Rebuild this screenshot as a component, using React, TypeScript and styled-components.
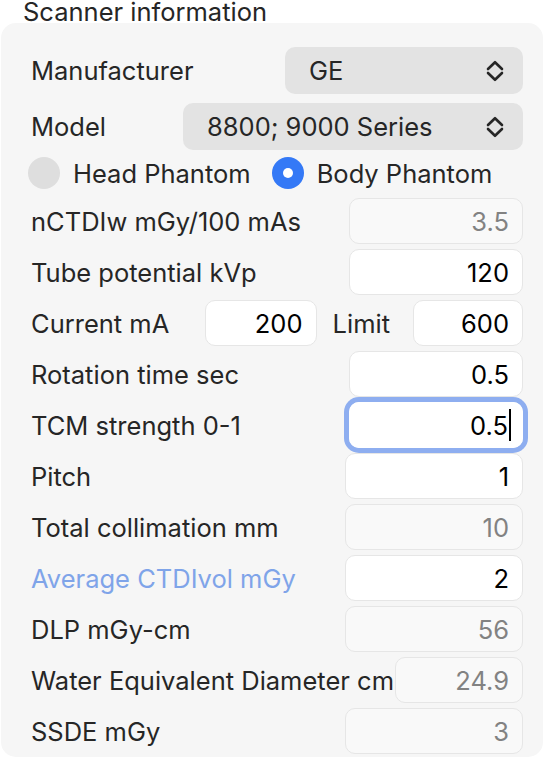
import React from 'react';
import styled, { createGlobalStyle } from 'styled-components';

const GlobalStyle = createGlobalStyle`
  html, body {
    margin: 0;
    padding: 0;
    background: #ffffff;
  }
  body {
    font-family: Inter, 'Noto Sans', sans-serif;
    color: #262626;
    -webkit-font-smoothing: antialiased;
  }
`;

const Page = styled.div`
  width: 545px;
  height: 760px;
  overflow: hidden;
  padding-left: 1px;
  box-sizing: border-box;
`;

const Title = styled.div`
  margin-left: 22px;
  height: 23px;
  font-size: 25.5px;
  line-height: 24px;
  color: #262626;
`;

const Panel = styled.div`
  width: 542px;
  height: 734px;
  box-sizing: border-box;
  background: #f6f6f6;
  border-radius: 15px;
  padding: 24px 20px 0 30px;
  display: flex;
  flex-direction: column;
  gap: 5px;
`;

const Row = styled.div<{ h?: number; mt?: number }>`
  display: flex;
  align-items: center;
  justify-content: space-between;
  height: ${(p) => p.h ?? 46}px;
  margin-top: ${(p) => p.mt ?? 0}px;
  flex-shrink: 0;
`;

const Label = styled.label<{ accent?: boolean }>`
  font-size: 25.5px;
  color: ${(p) => (p.accent ? '#7fa4e9' : '#262626')};
  white-space: nowrap;
`;

const Select = styled.div<{ w: number }>`
  width: ${(p) => p.w}px;
  height: 47px;
  box-sizing: border-box;
  background: #e3e3e3;
  border-radius: 10px;
  padding: 0 19px 0 24px;
  display: flex;
  align-items: center;
  justify-content: space-between;
  font-size: 25.5px;
  color: #262626;
`;

const Chevrons = () => (
  <svg width="18" height="22" viewBox="0 0 18 22" fill="none">
    <path
      d="M2 9 L9 2.2 L16 9 M2 13 L9 19.8 L16 13"
      stroke="#262626"
      strokeWidth="2.6"
      strokeLinecap="round"
      strokeLinejoin="round"
    />
  </svg>
);

const RadioGroup = styled.div`
  display: flex;
  align-items: center;
  margin-left: -3px;
`;

const RadioItem = styled.div<{ gapAfter?: number }>`
  display: flex;
  align-items: center;
  gap: 13px;
  margin-right: ${(p) => p.gapAfter ?? 0}px;
  font-size: 25.5px;
`;

const RadioDot = styled.span<{ checked?: boolean }>`
  width: 32px;
  height: 32px;
  border-radius: 50%;
  box-sizing: border-box;
  background: ${(p) => (p.checked ? '#3479f6' : '#dedede')};
  display: flex;
  align-items: center;
  justify-content: center;
  &::after {
    content: '';
    display: ${(p) => (p.checked ? 'block' : 'none')};
    width: 10px;
    height: 10px;
    border-radius: 50%;
    background: #ffffff;
  }
`;

const FieldWrap = styled.div<{ w: number; focused?: boolean; ml?: number }>`
  position: relative;
  width: ${(p) => p.w}px;
  height: 46px;
  flex-shrink: 0;
  margin-left: ${(p) => p.ml ?? 0}px;
  border-radius: 10px;
  box-shadow: ${(p) => (p.focused ? '0 0 0 5px #8eaef0' : 'none')};
`;

const Field = styled.input<{ focused?: boolean }>`
  width: 100%;
  height: 100%;
  box-sizing: border-box;
  border: ${(p) => (p.focused ? 'none' : '1.5px solid #e6e6e6')};
  border-radius: 10px;
  background: #ffffff;
  padding: 0 ${(p) => (p.focused ? 15 : 13)}px 0 10px;
  text-align: right;
  font-family: Inter, 'Noto Sans', sans-serif;
  font-size: 25.5px;
  color: #000000;
  outline: none;
  &:read-only {
    background: #f9f9f9;
    color: #828282;
  }
`;

const Caret = styled.span`
  position: absolute;
  right: 12px;
  top: 7px;
  width: 2.5px;
  height: 32px;
  background: #000000;
`;

const Inline = styled.div`
  display: flex;
  align-items: center;
`;

const InlineLabel = styled(Label)`
  margin-left: 16px;
`;

type FieldRow = {
  label: string;
  value: string;
  w: number;
  readOnly?: boolean;
  accent?: boolean;
  focused?: boolean;
};

const rows: FieldRow[] = [
  { label: 'nCTDIw mGy/100 mAs', value: '3.5', w: 174, readOnly: true },
  { label: 'Tube potential kVp', value: '120', w: 174 },
];

const rowsAfter: FieldRow[] = [
  { label: 'Rotation time sec', value: '0.5', w: 174 },
  { label: 'TCM strength 0-1', value: '0.5', w: 174, focused: true },
  { label: 'Pitch', value: '1', w: 178 },
  { label: 'Total collimation mm', value: '10', w: 178, readOnly: true },
  { label: 'Average CTDIvol mGy', value: '2', w: 178, accent: true },
  { label: 'DLP mGy-cm', value: '56', w: 178, readOnly: true },
  { label: 'Water Equivalent Diameter cm', value: '24.9', w: 128, readOnly: true },
  { label: 'SSDE mGy', value: '3', w: 178, readOnly: true },
];

const InputRow: React.FC<{ row: FieldRow; mt?: number }> = ({ row, mt }) => (
  <Row mt={mt}>
    <Label accent={row.accent}>{row.label}</Label>
    <FieldWrap w={row.w} focused={row.focused}>
      <Field defaultValue={row.value} readOnly={row.readOnly} focused={row.focused} />
      {row.focused && <Caret />}
    </FieldWrap>
  </Row>
);

const App: React.FC = () => {
  return (
    <Page>
      <GlobalStyle />
      <Title>Scanner information</Title>
      <Panel>
        <Row h={47}>
          <Label>Manufacturer</Label>
          <Select w={238}>
            <span>GE</span>
            <Chevrons />
          </Select>
        </Row>
        <Row h={47} mt={4}>
          <Label>Model</Label>
          <Select w={340}>
            <span>8800; 9000 Series</span>
            <Chevrons />
          </Select>
        </Row>
        <Row h={32} mt={2}>
          <RadioGroup>
            <RadioItem gapAfter={21}>
              <RadioDot />
              Head Phantom
            </RadioItem>
            <RadioItem>
              <RadioDot checked />
              Body Phantom
            </RadioItem>
          </RadioGroup>
        </Row>
        {rows.map((r, i) => (
          <InputRow key={r.label} row={r} mt={i === 0 ? 4 : 0} />
        ))}
        <Row>
          <Label>Current mA</Label>
          <Inline>
            <FieldWrap w={112}>
              <Field defaultValue="200" />
            </FieldWrap>
            <InlineLabel>Limit</InlineLabel>
            <FieldWrap w={110} ml={23}>
              <Field defaultValue="600" />
            </FieldWrap>
          </Inline>
        </Row>
        {rowsAfter.map((r) => (
          <InputRow key={r.label} row={r} />
        ))}
      </Panel>
    </Page>
  );
};

export default App;
